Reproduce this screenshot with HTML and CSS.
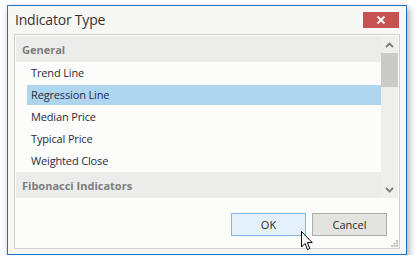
FILE: index.html
```
<!DOCTYPE html>
<html>
<head>
<meta charset="utf-8">
<link rel="stylesheet" href="styles.css">
</head>
<body>
<div class="window">
  <div class="titlebar">
    <span class="title">Indicator Type</span>
    <div class="close">
      <svg width="10" height="8" viewBox="0 0 10 8"><path d="M1.5 0.5 L8.5 7.5 M8.5 0.5 L1.5 7.5" stroke="#fff" stroke-width="2"/></svg>
    </div>
  </div>
  <div class="panel">
    <div class="listbox">
      <div class="list">
        <div class="group">General</div>
        <div class="item">Trend Line</div>
        <div class="item selected">Regression Line</div>
        <div class="item">Median Price</div>
        <div class="item">Typical Price</div>
        <div class="item">Weighted Close</div>
        <div class="group">Fibonacci Indicators</div>
      </div>
      <div class="scrollbar">
        <div class="arrow">
          <svg width="9" height="6" viewBox="0 0 9 6"><path d="M1 5 L4.5 1.5 L8 5" fill="none" stroke="#7a7a7a" stroke-width="1.8"/></svg>
        </div>
        <div class="thumb"></div>
        <div class="track"></div>
        <div class="arrow">
          <svg width="9" height="6" viewBox="0 0 9 6"><path d="M1 1 L4.5 4.5 L8 1" fill="none" stroke="#7a7a7a" stroke-width="1.8"/></svg>
        </div>
      </div>
    </div>
    <div class="buttons">
      <div class="btn ok">OK</div>
      <div class="btn">Cancel</div>
    </div>
    <svg class="grip" width="7" height="7" viewBox="0 0 7 7">
      <rect x="5" y="0" width="2" height="2" fill="#c4c4c4"/>
      <rect x="2.5" y="2.5" width="2" height="2" fill="#c4c4c4"/>
      <rect x="5" y="2.5" width="2" height="2" fill="#c4c4c4"/>
      <rect x="0" y="5" width="2" height="2" fill="#c4c4c4"/>
      <rect x="2.5" y="5" width="2" height="2" fill="#c4c4c4"/>
      <rect x="5" y="5" width="2" height="2" fill="#c4c4c4"/>
    </svg>
    <svg class="cursor" width="13" height="20" viewBox="0 0 13 20">
      <path d="M0.5 0.5 L0.5 16 L4 12.5 L6.5 18.5 L8.8 17.5 L6.3 11.6 L11.2 11.6 Z" fill="#fff" stroke="#000" stroke-width="1" stroke-linejoin="miter"/>
    </svg>
  </div>
</div>
</body>
</html>
```
FILE: styles.css
```
* { box-sizing: border-box; }
html, body { margin: 0; padding: 0; background: #ffffff; }
body { font-family: "Open Sans", "Noto Sans", sans-serif; }

.window {
  margin: 5px 0 0 7px;
  width: 400px;
  height: 250px;
  border: 1px solid #1a73c9;
  background: #f7f8f6;
  box-shadow: 2px 3px 7px rgba(0, 0, 0, 0.35);
  padding: 0 6px 5px 6px;
  display: flex;
  flex-direction: column;
}

.titlebar {
  height: 28px;
  display: flex;
  align-items: flex-start;
  justify-content: space-between;
}
.title {
  font-size: 14px;
  line-height: 28px;
  color: #333333;
  padding-left: 1px;
  letter-spacing: -0.2px;
}
.close {
  margin-top: 6px;
  margin-right: 1px;
  width: 36px;
  height: 16px;
  background: #c75050;
  display: flex;
  align-items: center;
  justify-content: center;
}
.close svg { display: block; }

.panel {
  position: relative;
  height: 215px;
  border: 1px solid #cfd0cd;
  background: #fcfcfa;
  padding: 1px;
  display: flex;
  flex-direction: column;
}

.listbox {
  display: flex;
  height: 162px;
}
.list {
  flex: 1;
  overflow: hidden;
}
.group {
  height: 26px;
  line-height: 26px;
  padding-top: 1px;
  background: #ecedea;
  color: #7d7d7d;
  font-weight: bold;
  font-size: 11px;
  padding-left: 6px;
  line-height: 25px;
}
.item {
  height: 22px;
  line-height: 20px;
  padding: 1px 0 1px 15px;
  font-size: 11px;
  letter-spacing: -0.15px;
  color: #1f2d3d;
}
.item.selected {
  background: linear-gradient(#aed6f1, #aed6f1) no-repeat 11px 1px / calc(100% - 11px) 20px;
}

.scrollbar {
  width: 17px;
  background: #eeefec;
  display: flex;
  flex-direction: column;
}
.arrow {
  height: 17px;
  display: flex;
  align-items: center;
  justify-content: center;
}
.arrow svg { display: block; }
.thumb {
  height: 34px;
  background: #cacbc8;
}
.track { flex: 1; }

.buttons {
  display: flex;
  justify-content: flex-end;
  gap: 6px;
  padding: 15px 11px 0 0;
}
.btn {
  width: 75px;
  height: 23px;
  border: 1px solid #adadad;
  background: #e3e3e1;
  font-size: 11px;
  line-height: 21px;
  text-align: center;
  color: #2a2a2a;
}
.btn.ok {
  border-color: #80b6e6;
  background: #e4f0fb;
}

.grip {
  position: absolute;
  right: 1px;
  bottom: 1px;
}
.cursor {
  position: absolute;
  left: 286px;
  top: 196px;
}
```
